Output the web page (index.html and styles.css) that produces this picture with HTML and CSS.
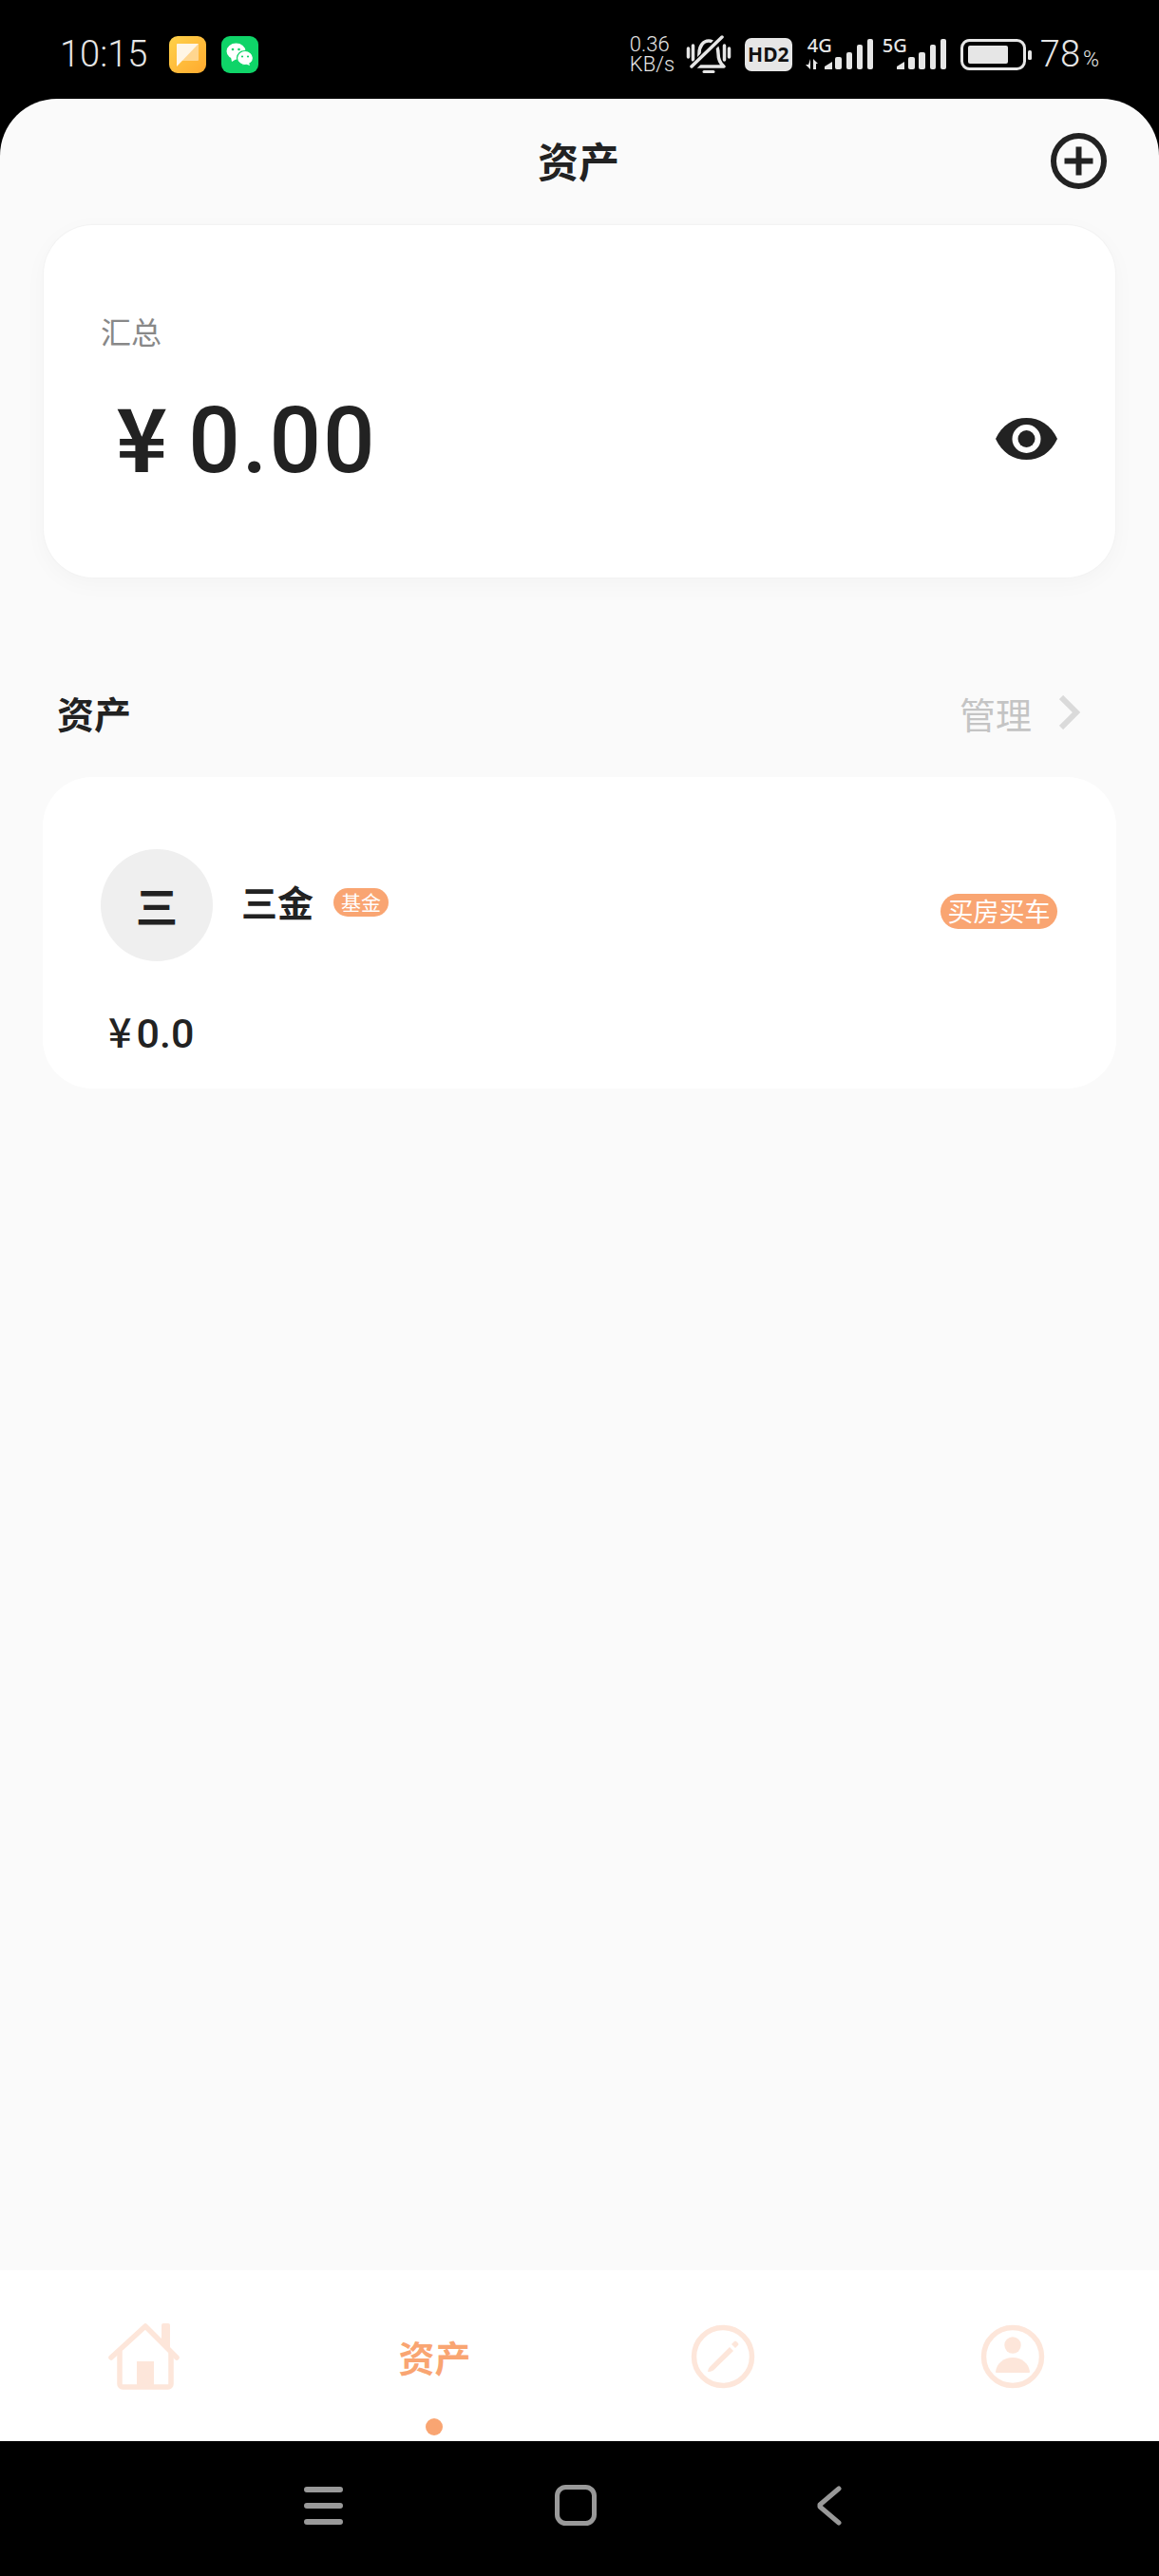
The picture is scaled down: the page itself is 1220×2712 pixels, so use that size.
FILE: index.html
```html
<!DOCTYPE html>
<html>
<head>
    <meta charset="utf-8">
    <link rel="stylesheet" href="styles.css">
</head>
<body>
    <div class="status-bar">
        <div class="status-left">
            <span class="clock">10:15</span>
            <svg class="app-icon" width="39" height="39" viewBox="0 0 39 39">
                <defs>
                    <linearGradient id="noteBg" x1="0" y1="0" x2="1" y2="1">
                        <stop offset="0" stop-color="#ffd24a"/>
                        <stop offset="1" stop-color="#ffa92e"/>
                    </linearGradient>
                </defs>
                <rect width="39" height="39" rx="9" fill="url(#noteBg)"/>
                <rect x="8" y="8" width="23" height="18" rx="1" fill="#ffd68f"/>
                <path d="M8 9a1 1 0 0 1 1-1h22L8 32z" fill="#fff6e6"/>
            </svg>
            <svg class="app-icon" width="39" height="39" viewBox="0 0 39 39">
                <rect width="39" height="39" rx="9" fill="#0fd468"/>
                <ellipse cx="15.500" cy="16" rx="10" ry="8.500" fill="#fff"/>
                <path d="M10 22l1 5 5-3z" fill="#fff"/>
                <ellipse cx="25" cy="23" rx="8.500" ry="7.500" fill="#fff" stroke="#0fd468" stroke-width="1.200"/>
                <path d="M29 28l1 3-4-1.500z" fill="#fff"/>
                <circle cx="12" cy="14" r="1.300" fill="#0fd468"/>
                <circle cx="18.500" cy="14" r="1.300" fill="#0fd468"/>
                <circle cx="22" cy="21.500" r="1.100" fill="#0fd468"/>
                <circle cx="28" cy="21.500" r="1.100" fill="#0fd468"/>
            </svg>
        </div>
        <div class="status-right">
            <div class="net-speed"><span>0.36</span><span>KB/s</span></div>
            <svg class="bell" width="48" height="40" viewBox="0 0 48 40" fill="none" stroke="#e6e6e6">
                <path d="M2.500 14v9M7.500 11v15M40.500 11v15M45.500 14v9" stroke-width="3.500" stroke-linecap="round"/>
                <path d="M9 33c4-4 5-8 5-14 0-7 4-13 10-13s10 6 10 13c0 6 1 10 6 14z" stroke-width="3.500" stroke-linejoin="round"/>
                <path d="M19 38.500h10" stroke-width="3" stroke-linecap="round"/>
                <path d="M7 34L39 1" stroke="#000" stroke-width="8"/>
                <path d="M6 33L38 2" stroke-width="3.500" stroke-linecap="round"/>
            </svg>
            <div class="hd-badge">HD2</div>
            <div class="signal signal-first">
                <span class="net-label">4G</span>
                <svg width="72" height="34" viewBox="0 0 72 34" fill="#e6e6e6">
                    <path d="M6 22v11L1 28h3zM9 22l5 5h-2v6H9z"/>
                    <path d="M21 33v-3l8-5v8z"/>
                    <rect x="32" y="20" width="7" height="13" rx="2"/>
                    <rect x="44" y="15" width="6" height="18" rx="2"/>
                    <rect x="55" y="7" width="6" height="26" rx="2"/>
                    <rect x="66" y="1" width="6" height="32" rx="2"/>
                </svg>
            </div>
            <div class="signal signal-second">
                <span class="net-label">5G</span>
                <svg width="71" height="34" viewBox="0 0 71 34" fill="#e6e6e6">
                    <path d="M18 33v-3l8-5v8z"/>
                    <rect x="30" y="20" width="7" height="13" rx="2"/>
                    <rect x="41" y="15" width="7" height="18" rx="2"/>
                    <rect x="53" y="7" width="6" height="26" rx="2"/>
                    <rect x="64" y="1" width="6" height="32" rx="2"/>
                </svg>
            </div>
            <svg class="battery" width="75" height="33" viewBox="0 0 75 33">
                <rect x="1.500" y="1.500" width="66" height="30" rx="8" fill="none" stroke="#e6e6e6" stroke-width="3"/>
                <rect x="8" y="7" width="42" height="19" rx="2" fill="#e6e6e6"/>
                <rect x="71" y="12" width="4" height="10" rx="1.500" fill="#e6e6e6"/>
            </svg>
            <div class="battery-level">78<small>%</small></div>
        </div>
    </div>

    <div class="screen">
        <header class="top-bar">
            <h1>资产</h1>
            <svg class="add-icon" width="59" height="59" viewBox="0 0 59 59" fill="none" stroke="#222" stroke-width="6">
                <circle cx="29.500" cy="29.500" r="26.500"/>
                <path d="M29.500 14.500v30M14.500 29.500h30"/>
            </svg>
        </header>

        <section class="total-card">
            <div class="total-label">汇总</div>
            <div class="total-row">
                <div class="total-amount"><span class="yen">¥</span>0.00</div>
                <svg class="eye-icon" width="65" height="44" viewBox="0 0 65 44">
                    <path d="M0 22C7 7 19 0 32.500 0S58 7 65 22c-7 15-19 22-32.500 22S7 37 0 22z" fill="#222"/>
                    <circle cx="32.500" cy="22" r="15" fill="#fff"/>
                    <circle cx="32.500" cy="22" r="9" fill="#222"/>
                </svg>
            </div>
        </section>

        <div class="section-head">
            <h2>资产</h2>
            <div class="manage">
                <span>管理</span>
                <svg width="22" height="36" viewBox="0 0 22 36" fill="none" stroke="#dadada" stroke-width="6">
                    <path d="M2 2l16 16L2 34"/>
                </svg>
            </div>
        </div>

        <section class="asset-card">
            <div class="asset-top">
                <div class="avatar">三</div>
                <div class="asset-name">三金</div>
                <span class="tag small-tag">基金</span>
                <span class="tag goal-tag">买房买车</span>
            </div>
            <div class="asset-amount"><span class="yen-small">¥</span>0.0</div>
        </section>
    </div>

    <nav class="tab-bar">
        <div class="tab">
            <svg width="78" height="70" viewBox="0 0 78 70" fill="#fde6da">
                <path d="M3 36L39 3l33 33" fill="none" stroke="#fde6da" stroke-width="5.500" stroke-linecap="round" stroke-linejoin="round"/>
                <path d="M56 20V2a2 2 0 0 1 2-2h5a2 2 0 0 1 2 2v27z"/>
                <path d="M12 29v35a3 3 0 0 0 3 3h48a3 3 0 0 0 3-3V29" fill="none" stroke="#fde6da" stroke-width="5.500"/>
                <rect x="30" y="40" width="18" height="26"/>
            </svg>
        </div>
        <div class="tab tab-active">
            <span>资产</span>
            <i class="tab-dot"></i>
        </div>
        <div class="tab tab-ring">
            <svg width="68" height="68" viewBox="0 0 68 68" fill="#fde6da">
                <circle cx="34" cy="34" r="30.500" fill="none" stroke="#fde6da" stroke-width="5.500"/>
                <path d="M41 24l4 4-21 20.500q-3 1.500-6 1.500 0-3 2-5z"/>
                <path d="M43 21l3-3q1-1 2 0l2 2q1 1 0 2l-3 3z"/>
            </svg>
        </div>
        <div class="tab tab-ring">
            <svg width="68" height="68" viewBox="0 0 68 68" fill="#fde6da">
                <circle cx="34" cy="34" r="30.500" fill="none" stroke="#fde6da" stroke-width="5.500"/>
                <circle cx="34" cy="22" r="8.700"/>
                <path d="M16 50c1-9 9-15 18-15s17 6 18 15q0 1-1 1H17q-1 0-1-1z"/>
            </svg>
        </div>
    </nav>

    <div class="nav-bar">
        <svg class="nav-menu" width="41" height="40" viewBox="0 0 41 40" fill="none" stroke="#999" stroke-width="6" stroke-linecap="round">
            <path d="M3 3h35M3 20h35M3 37h35"/>
        </svg>
        <svg class="nav-home" width="44" height="43" viewBox="0 0 44 43" fill="none" stroke="#999" stroke-width="5">
            <rect x="2.500" y="2.500" width="39" height="38" rx="9"/>
        </svg>
        <svg class="nav-back" width="27" height="42" viewBox="0 0 27 42" fill="none" stroke="#999" stroke-width="5" stroke-linecap="round" stroke-linejoin="round">
            <path d="M24 3L4 20v2l20 17"/>
        </svg>
    </div>
</body>
</html>
```

FILE: styles.css
```css
* {
    box-sizing: border-box;
}

html, body {
    margin: 0;
    padding: 0;
}

body {
    width: 1220px;
    height: 2712px;
    display: flex;
    flex-direction: column;
    background-color: #000;
    font-family: "Noto Sans CJK SC", "Noto Sans", sans-serif;
    color: #222;
    overflow: hidden;
}

h1, h2 {
    margin: 0;
}

/* Status bar */
.status-bar {
    height: 104px;
    flex: none;
    display: flex;
    justify-content: space-between;
    padding: 36px 63px 0 63px;
    color: #e6e6e6;
}

.status-left {
    height: 42px;
    display: flex;
    align-items: center;
}

.clock {
    width: 115px;
    font-family: Roboto, sans-serif;
    font-size: 38px;
    font-weight: 300;
}

.app-icon {
    margin-right: 16px;
}

.status-right {
    height: 42px;
    display: flex;
    align-items: center;
}

.net-speed {
    display: flex;
    flex-direction: column;
    width: 46px;
    font-family: Roboto, sans-serif;
    font-size: 22px;
    font-weight: 300;
    line-height: 21px;
}

.bell {
    margin-left: 13px;
}

.hd-badge {
    width: 50px;
    height: 35px;
    margin-left: 14px;
    border-radius: 7px;
    background-color: #e6e6e6;
    color: #111;
    font-family: "Noto Sans", sans-serif;
    font-size: 21px;
    font-weight: 700;
    line-height: 35px;
    text-align: center;
}

.signal {
    position: relative;
    height: 34px;
}

.signal svg {
    display: block;
}

.signal-first {
    margin-left: 13px;
}

.signal-second {
    margin-left: 7px;
}

.net-label {
    position: absolute;
    top: 0;
    left: 3px;
    font-family: "Noto Sans", sans-serif;
    font-size: 20px;
    font-weight: 500;
    line-height: 16px;
}

.battery {
    margin-left: 14px;
}

.battery-level {
    margin-left: 9px;
    font-family: Roboto, sans-serif;
    font-size: 38px;
    font-weight: 300;
}

.battery-level small {
    margin-left: 3px;
    font-size: 23px;
}

/* Main screen */
.screen {
    flex: 1;
    background-color: #fafafa;
    border-radius: 60px 60px 0 0;
    padding: 0 45px;
}

.top-bar {
    height: 133px;
    padding: 0 2px 5px 0;
    display: flex;
    align-items: center;
    justify-content: center;
    position: relative;
}

.top-bar h1 {
    font-size: 43px;
    font-weight: 700;
    line-height: 1;
}

.add-icon {
    position: absolute;
    right: 10px;
    top: 36px;
}

.total-card {
    height: 371px;
    margin: 0 1px;
    padding: 91px 61px 0 60px;
    background-color: #fff;
    border-radius: 52px;
    box-shadow: 0 0 0 1px #f3f3f3, 0 6px 24px rgba(0, 0, 0, 0.03);
}

.total-label {
    font-size: 32px;
    line-height: 40px;
    color: #888;
}

.total-row {
    display: flex;
    align-items: flex-start;
    justify-content: space-between;
    margin-top: 39px;
}

.total-amount {
    font-family: Roboto, sans-serif;
    font-size: 96px;
    font-weight: 500;
    letter-spacing: 2px;
    line-height: 100px;
    padding-left: 16px;
}

.yen {
    font-family: "Noto Sans CJK SC", sans-serif;
    font-size: 92px;
    font-weight: 700;
    margin-right: 20px;
}

.eye-icon {
    margin-top: 33px;
}

.section-head {
    display: flex;
    align-items: center;
    justify-content: space-between;
    height: 60px;
    margin-top: 112px;
    padding: 0 38px 0 15px;
}

.section-head h2 {
    font-size: 39px;
    font-weight: 700;
}

.manage {
    display: flex;
    align-items: center;
    gap: 29px;
    color: #c4c4c4;
    font-size: 38px;
}

.asset-card {
    height: 328px;
    margin-top: 38px;
    padding: 76px 62px 0 61px;
    background-color: #fff;
    border-radius: 52px;
}

.asset-top {
    display: flex;
    align-items: flex-start;
}

.avatar {
    width: 118px;
    height: 118px;
    flex: none;
    display: flex;
    align-items: center;
    justify-content: center;
    border-radius: 50%;
    background-color: #efefef;
    font-size: 44px;
    font-weight: 700;
}

.asset-name {
    margin: 30px 0 0 30px;
    font-size: 38px;
    font-weight: 700;
    line-height: 50px;
}

.tag {
    display: block;
    background-color: #f9a572;
    color: #fff;
    text-align: center;
}

.small-tag {
    width: 58px;
    height: 30px;
    margin: 41px 0 0 21px;
    border-radius: 15px;
    font-size: 21px;
    line-height: 29px;
}

.goal-tag {
    width: 123px;
    height: 37px;
    margin: 47px 0 0 auto;
    border-radius: 19px;
    font-size: 27px;
    line-height: 36px;
}

.asset-amount {
    margin: 47px 0 0 8px;
    font-family: Roboto, sans-serif;
    font-size: 43px;
    font-weight: 500;
    line-height: 50px;
}

.yen-small {
    font-family: "Noto Sans CJK SC", sans-serif;
    margin-right: 5px;
}

/* Bottom tabs */
.tab-bar {
    height: 180px;
    flex: none;
    display: grid;
    grid-template-columns: 305px 305px 305px 305px;
    background-color: #fff;
}

.tab {
    display: flex;
    justify-content: center;
    padding-top: 56px;
    position: relative;
}

.tab svg {
    display: block;
}

.tab-ring {
    padding-top: 57px;
    padding-right: 4px;
}

.tab-active {
    color: #f9a572;
    font-size: 38px;
    font-weight: 700;
    line-height: 50px;
    padding-top: 66px;
}

.tab-dot {
    position: absolute;
    left: 143px;
    bottom: 6px;
    width: 18px;
    height: 18px;
    border-radius: 50%;
    background-color: #f9a572;
}

.nav-bar {
    height: 142px;
    flex: none;
    display: flex;
    align-items: flex-start;
    padding: 48px 0 0 320px;
    background-color: #000;
}

.nav-home {
    margin-left: 223px;
    margin-top: -2px;
}

.nav-back {
    margin-left: 231px;
    margin-top: -1px;
}
```
